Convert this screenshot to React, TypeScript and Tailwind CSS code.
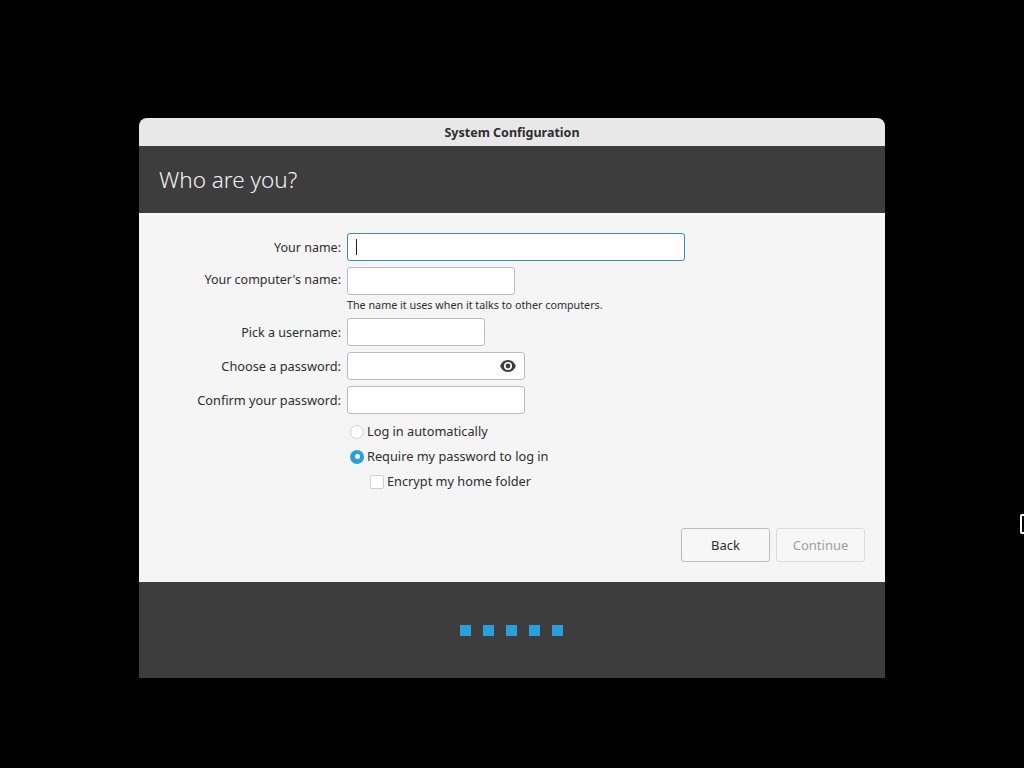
function Field({ label, width, focused, up, wide, children }: { label: string; width: string; focused?: boolean; up?: boolean; wide?: boolean; children?: React.ReactNode }) {
  return (
    <div className="flex items-center gap-[6px]">
      <div className={`w-[202px] text-right text-[#2e2e2e] whitespace-nowrap ${wide ? 'text-[12.75px]' : 'text-[12.5px]'} ${up ? 'pb-[1px]' : 'pt-[2px]'}`}>{label}</div>
      <div
        className={`h-[28px] ${width} rounded-[3px] bg-white border flex items-center justify-end ${
          focused ? 'border-[#3f8bb0]' : 'border-[#bcbcbc]'
        }`}
      >
        {children}
      </div>
    </div>
  )
}

export default function App() {
  return (
    <div className="relative w-full h-[768px] bg-black flex flex-col items-center pt-[118px] overflow-hidden font-['Noto_Sans',sans-serif]">
      {/* Window */}
      <div className="w-[746px] flex flex-col">
        {/* Title bar */}
        <div className="h-[28px] pt-[2px] bg-[#e8e8e8] rounded-t-[8px] flex items-center justify-center text-[12.5px] font-bold text-[#2e2e2e]">
          System Configuration
        </div>

        {/* Header */}
        <div className="h-[67px] bg-[#3d3d3d] flex items-center pl-[20px] text-[22.5px] font-light text-[#f2f2f2]">
          Who are you?
        </div>

        {/* Form */}
        <div className="h-[369px] bg-[#f5f5f5] flex flex-col pt-[20px] pr-[20px]">
          <Field label="Your name:" width="w-[338px]" focused>
            <div className="w-[1px] h-[16px] bg-[#222] mr-auto ml-[8px]" />
          </Field>
          <div className="mt-[6px]">
            <Field label="Your computer's name:" width="w-[168px]" up />
          </div>
          <div className="ml-[208px] h-[23px] pb-[2px] flex items-center text-[10.75px] text-[#2e2e2e] whitespace-nowrap">
            The name it uses when it talks to other computers.
          </div>
          <Field label="Pick a username:" width="w-[138px]" />
          <div className="mt-[6px]">
            <Field label="Choose a password:" width="w-[178px]" wide>
              <svg width="16" height="16" viewBox="0 0 16 16" className="mr-[8px] text-[#3d3d3d]">
                <path
                  fill="currentColor"
                  fillRule="evenodd"
                  d="M8 2C4 2 1.200 4.900.2 8c1 3.100 3.800 6 7.800 6s6.800-2.900 7.800-6C14.800 4.900 12 2 8 2zM8 4a4 4 0 1 1 0 8a4 4 0 0 1 0-8z"
                />
                <circle cx="8" cy="8" r="2.400" fill="currentColor" />
              </svg>
            </Field>
          </div>
          <div className="mt-[6px]">
            <Field label="Confirm your password:" width="w-[178px]" wide />
          </div>

          {/* Login options */}
          <div className="ml-[211px] mt-[5px] flex flex-col text-[12.75px] text-[#2e2e2e]">
            <div className="h-[25px] flex items-center gap-[3px]">
              <div className="w-[14px] h-[14px] rounded-full bg-white border border-[#d0d0d0]" />
              <span>Log in automatically</span>
            </div>
            <div className="h-[25px] flex items-center gap-[3px]">
              <div className="w-[14px] h-[14px] rounded-full bg-[#2a9fdb] flex items-center justify-center">
                <div className="w-[5px] h-[5px] rounded-full bg-white" />
              </div>
              <span>Require my password to log in</span>
            </div>
            <div className="h-[25px] flex items-center gap-[3px] ml-[20px]">
              <div className="w-[14px] h-[14px] rounded-[2px] bg-white border border-[#d0d0d0]" />
              <span>Encrypt my home folder</span>
            </div>
          </div>

          {/* Buttons */}
          <div className="mt-[34px] flex justify-end gap-[6px] text-[13px]">
            <div className="w-[89px] h-[34px] pt-[1px] rounded-[3px] border border-[#bcbcbc] bg-[#f7f7f7] flex items-center justify-center text-[#2e2e2e]">
              Back
            </div>
            <div className="w-[89px] h-[34px] pt-[1px] rounded-[3px] border border-[#dcdcdc] bg-[#f7f7f7] flex items-center justify-center text-[#a0a0a0]">
              Continue
            </div>
          </div>
        </div>

        {/* Progress */}
        <div className="h-[96px] pr-[2px] bg-[#3d3d3d] flex items-center justify-center gap-[12px]">
          <div className="w-[11px] h-[11px] bg-[#2a9fdb]" />
          <div className="w-[11px] h-[11px] bg-[#2a9fdb]" />
          <div className="w-[11px] h-[11px] bg-[#2a9fdb]" />
          <div className="w-[11px] h-[11px] bg-[#2a9fdb]" />
          <div className="w-[11px] h-[11px] bg-[#2a9fdb]" />
        </div>
      </div>

      {/* Stray pointer at the screen edge */}
      <div className="absolute left-[1020px] top-[514px] w-[8px] h-[20px] rounded-[2px] border-2 border-white" />
    </div>
  )
}
